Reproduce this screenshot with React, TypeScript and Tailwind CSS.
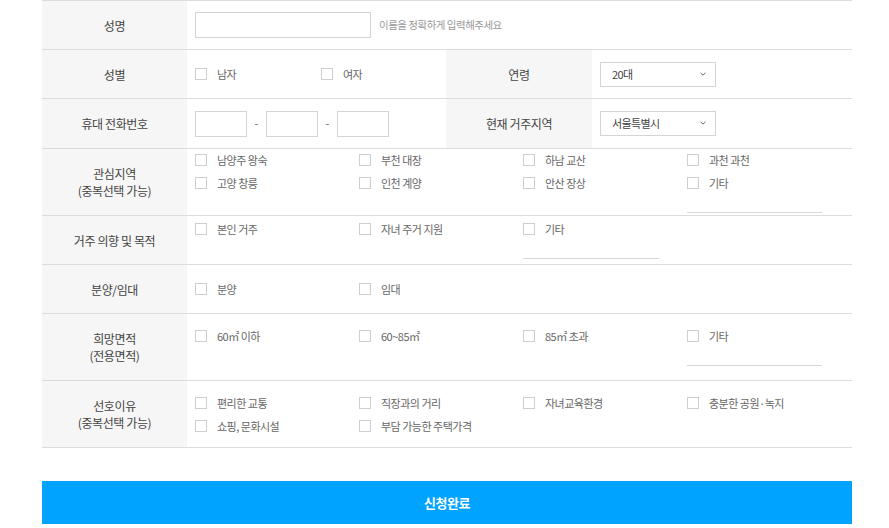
import React from "react";

function Check({ label }: { label: string }) {
  return (
    <label className="flex items-center h-[16px] whitespace-nowrap">
      <span className="w-[12px] h-[12px] border border-[#cfcfcf] bg-white shrink-0" />
      <span className="ml-[10px] text-[11px] tracking-[-0.5px] leading-[16px] text-[#666]">{label}</span>
    </label>
  );
}

function Etc({ w }: { w: string }) {
  return (
    <div className="flex flex-col">
      <Check label="기타" />
      <div className={`h-[22px] border-b border-[#d6d6d6] ${w}`} />
    </div>
  );
}

function Label({ children, className = "" }: { children: React.ReactNode; className?: string }) {
  return (
    <div
      className={`w-[145px] shrink-0 bg-[#f6f6f6] flex flex-col items-center justify-center text-[12px] tracking-[-0.4px] leading-[17px] text-[#444] ${className}`}
    >
      {children}
    </div>
  );
}

function Grid({ children }: { children: React.ReactNode }) {
  return (
    <div className="flex-1 flex items-center pl-[8px]">
      <div className="grid grid-cols-[164px_164px_164px_164px] gap-y-[7px] items-start">{children}</div>
    </div>
  );
}

function Select({ value }: { value: string }) {
  return (
    <div className="w-[116px] h-[25px] border border-[#d4d4d4] bg-white flex items-center justify-between pl-[11px] pr-[9px]">
      <span className="text-[11px] tracking-[-0.6px] text-[#444]">{value}</span>
      <svg width="6" height="4" viewBox="0 0 6 4" className="mt-[-1px]">
        <path d="M0.5 0.8 L3 3.2 L5.5 0.8" fill="none" stroke="#666" strokeWidth="1" />
      </svg>
    </div>
  );
}

function PhoneInput() {
  return <div className="w-[52px] h-[26px] border border-[#d4d4d4] bg-white" />;
}

export default function App() {
  return (
    <div className="w-[889px] h-[528px] bg-white overflow-hidden font-['Noto_Sans_CJK_KR','Noto_Sans',sans-serif]">
      <div className="ml-[42px] w-[810px]">
        <div className="border-t border-[#dcdcdc]">
          {/* 성명 */}
          <div className="flex h-[49px] border-b border-[#dcdcdc]">
            <Label>성명</Label>
            <div className="flex-1 flex items-center pl-[8px]">
              <div className="w-[176px] h-[26px] border border-[#d4d4d4] bg-white" />
              <span className="ml-[8px] text-[10.5px] tracking-[-0.5px] text-[#999]">이름을 정확하게 입력해주세요</span>
            </div>
          </div>
          {/* 성별 / 연령 */}
          <div className="flex h-[49px] border-b border-[#dcdcdc]">
            <Label>성별</Label>
            <div className="w-[259px] shrink-0 flex items-center pl-[8px]">
              <div className="w-[126px]">
                <Check label="남자" />
              </div>
              <Check label="여자" />
            </div>
            <Label className="w-[146px]">연령</Label>
            <div className="flex-1 flex items-center pl-[8px]">
              <Select value="20대" />
            </div>
          </div>
          {/* 휴대 전화번호 / 현재 거주지역 */}
          <div className="flex h-[50px] border-b border-[#dcdcdc]">
            <Label>휴대 전화번호</Label>
            <div className="w-[259px] shrink-0 flex items-center pl-[8px]">
              <PhoneInput />
              <span className="w-[19px] text-center text-[11px] text-[#666]">-</span>
              <PhoneInput />
              <span className="w-[19px] text-center text-[11px] text-[#666]">-</span>
              <PhoneInput />
            </div>
            <Label className="w-[146px]">현재 거주지역</Label>
            <div className="flex-1 flex items-center pl-[8px]">
              <Select value="서울특별시" />
            </div>
          </div>
          {/* 관심지역 */}
          <div className="flex h-[67px] border-b border-[#dcdcdc]">
            <Label>
              <span>관심지역</span>
              <span>(중복선택 가능)</span>
            </Label>
            <Grid>
              <Check label="남양주 왕숙" />
              <Check label="부천 대장" />
              <Check label="하남 교산" />
              <Check label="과천 과천" />
              <Check label="고양 창릉" />
              <Check label="인천 계양" />
              <Check label="안산 장상" />
              <Etc w="w-[135px]" />
            </Grid>
          </div>
          {/* 거주 의향 및 목적 */}
          <div className="flex h-[49px] border-b border-[#dcdcdc]">
            <Label>거주 의향 및 목적</Label>
            <Grid>
              <Check label="본인 거주" />
              <Check label="자녀 주거 지원" />
              <Etc w="w-[136px]" />
            </Grid>
          </div>
          {/* 분양/임대 */}
          <div className="flex h-[49px] border-b border-[#dcdcdc]">
            <Label>분양/임대</Label>
            <Grid>
              <Check label="분양" />
              <Check label="임대" />
            </Grid>
          </div>
          {/* 희망면적 */}
          <div className="flex h-[67px] border-b border-[#dcdcdc]">
            <Label>
              <span>희망면적</span>
              <span>(전용면적)</span>
            </Label>
            <Grid>
              <Check label="60㎡ 이하" />
              <Check label="60~85㎡" />
              <Check label="85㎡ 초과" />
              <Etc w="w-[135px]" />
            </Grid>
          </div>
          {/* 선호이유 */}
          <div className="flex h-[67px] border-b border-[#dcdcdc]">
            <Label>
              <span>선호이유</span>
              <span>(중복선택 가능)</span>
            </Label>
            <Grid>
              <Check label="편리한 교통" />
              <Check label="직장과의 거리" />
              <Check label="자녀교육환경" />
              <Check label="충분한 공원·녹지" />
              <Check label="쇼핑, 문화시설" />
              <Check label="부담 가능한 주택가격" />
            </Grid>
          </div>
        </div>
        <button className="mt-[33px] w-full h-[43px] bg-[#00a3ff] text-white text-[13px] font-bold tracking-[-0.5px] flex items-center justify-center">
          신청완료
        </button>
      </div>
    </div>
  );
}
